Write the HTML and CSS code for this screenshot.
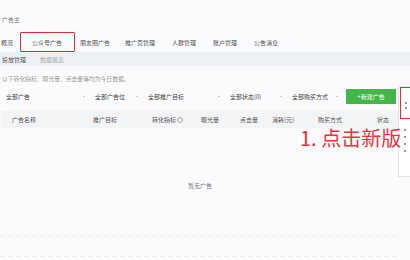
FILE: index.html
```html
<!DOCTYPE html>
<html lang="zh">
<head>
    <meta charset="UTF-8">
    <title>广告主</title>
    <link rel="stylesheet" href="styles.css">
</head>
<body>
    <div class="page">
        <div class="brand">广告主</div>

        <nav class="tabs">
            <span class="tab">概况</span>
            <span class="tab active">公众号广告</span>
            <span class="tab">朋友圈广告</span>
            <span class="tab">推广页管理</span>
            <span class="tab">人群管理</span>
            <span class="tab">账户管理</span>
            <span class="tab">公告消息</span>
        </nav>

        <div class="subtabs">
            <span class="subtab current">投放管理</span>
            <span class="subtab">数据报表</span>
        </div>

        <div class="content">
            <p class="tip">以下转化指标、曝光量、点击量等均为今日数据。</p>

            <div class="filters">
                <div class="select w1">全部广告<i class="arrow"></i></div>
                <div class="select w2">全部广告位<i class="arrow"></i></div>
                <div class="select w3">全部推广目标<i class="arrow"></i></div>
                <div class="select w4">全部状态(0)<i class="arrow"></i></div>
                <div class="select w5">全部购买方式<i class="arrow"></i></div>
                <button class="btn-new">+新建广告</button>
            </div>

            <div class="table-head">
                <span class="c1">广告名称</span>
                <span class="c2">推广目标</span>
                <span class="c3">转化指标 <i class="info">i</i></span>
                <span class="c4">曝光量</span>
                <span class="c5">点击量</span>
                <span class="c6">消耗(元)</span>
                <span class="c7">购买方式</span>
                <span class="c8">状态</span>
            </div>

            <div class="empty">暂无广告</div>
        </div>

        <div class="footer">
            <div class="faint-line"></div>
            <div class="faint-line"></div>
        </div>
    </div>

    <!-- 右侧弹出的新版入口 -->
    <div class="popup">
        <div class="popup-top">
            <span class="line"></span>
            <span class="line short"></span>
        </div>
        <div class="popup-body">
            <span class="line"></span>
            <span class="line"></span>
            <span class="line"></span>
            <span class="line"></span>
        </div>
    </div>

    <div class="note">1. 点击新版</div>
</body>
</html>
```

FILE: styles.css
```css
body {
    margin: 0;
    font-family: "Noto Sans CJK SC", "Noto Sans", sans-serif;
    font-size: 6px;
    color: #666;
    background-color: #fbfbfd;
    width: 410px;
    height: 260px;
    overflow: hidden;
    position: relative;
}

.page {
    display: flex;
    flex-direction: column;
}

.brand {
    padding: 15px 0 0 2px;
    height: 17px;
    color: #777;
}

.tabs {
    display: flex;
    align-items: center;
    height: 20px;
    color: #555;
}

.tab {
    margin-right: 17px;
    white-space: nowrap;
}

.tab:first-child {
    margin-left: 1px;
    margin-right: 0;
}

.tab.active {
    margin-left: 7px;
    margin-right: 0;
    padding: 0 11px;
    height: 20px;
    line-height: 20px;
    border: 1.5px solid #d9323a;
    border-radius: 1px;
    box-sizing: border-box;
    width: 55px;
}

.tab.active + .tab {
    margin-left: 5px;
    margin-right: 15px;
}

.subtabs {
    display: flex;
    align-items: center;
    height: 14px;
    background-color: #eef1f4;
    padding-left: 2px;
    gap: 14px;
}

.subtab {
    color: #aaa;
}

.subtab.current {
    color: #555;
}

.content {
    padding: 0 2px;
}

.tip {
    margin: 8px 0 0;
    height: 12px;
    color: #999;
    font-size: 5.8px;
}

.filters {
    display: flex;
    align-items: center;
    height: 16px;
    margin-top: 2px;
}

.select {
    position: relative;
    padding-left: 4px;
    color: #444;
    box-sizing: border-box;
}

.w1 { width: 89px; }
.w2 { width: 53px; }
.w3 { width: 82px; }
.w4 { width: 62px; }
.w5 { width: 56px; }

.arrow {
    position: absolute;
    right: 6px;
    top: 4px;
    width: 2px;
    height: 1px;
    background-color: #ccc;
}

.btn-new {
    margin-left: 2px;
    width: 50px;
    height: 15px;
    border: none;
    border-radius: 1px;
    background-color: #44b549;
    color: #fff;
    font-family: inherit;
    font-size: 6px;
    padding: 0;
}

.table-head {
    display: flex;
    align-items: center;
    height: 17px;
    margin-top: 7px;
    margin-right: 8px;
    background-color: #f2f4f6;
    color: #555;
    position: relative;
}

.table-head span {
    position: absolute;
    white-space: nowrap;
}

.c1 { left: 10px; }
.c2 { left: 91px; }
.c3 { left: 150px; }
.c4 { left: 199px; }
.c5 { left: 238px; }
.c6 { left: 270px; }
.c7 { left: 316px; }
.c8 { left: 375px; }

.info {
    display: inline-block;
    width: 4px;
    height: 4px;
    border: 0.6px solid #aaa;
    border-radius: 50%;
    font-size: 3px;
    line-height: 4px;
    text-align: center;
    font-style: normal;
    color: #aaa;
    vertical-align: middle;
}

.empty {
    text-align: center;
    margin-top: 53px;
    color: #777;
    padding-right: 10px;
}

.footer {
    margin-top: 46px;
}

.faint-line {
    height: 1px;
    margin: 0 10px 19px 0;
    background-image: linear-gradient(90deg, #eef0f4 60%, transparent 60%);
    background-size: 8px 1px;
}

.popup {
    position: absolute;
    left: 398px;
    top: 86px;
    width: 60px;
    height: 91px;
    background-color: #fff;
    border: 1px solid #e3e5e8;
    box-sizing: border-box;
}

.popup-top {
    margin: 0 0 0 1px;
    height: 32px;
    border: 1.5px solid #d9323a;
    border-right: none;
    box-sizing: border-box;
    padding: 14px 0 0 4px;
    display: flex;
    flex-direction: column;
    gap: 3px;
}

.popup-body {
    padding: 10px 0 0 5px;
    display: flex;
    flex-direction: column;
    gap: 5px;
}

.line {
    display: block;
    width: 2px;
    height: 2px;
    background-color: #999;
}

.note {
    position: absolute;
    left: 300px;
    top: 128px;
    font-family: "Noto Sans CJK SC", "Noto Sans", sans-serif;
    font-size: 20px;
    line-height: 20px;
    color: #e8343a;
    white-space: nowrap;
}
```
